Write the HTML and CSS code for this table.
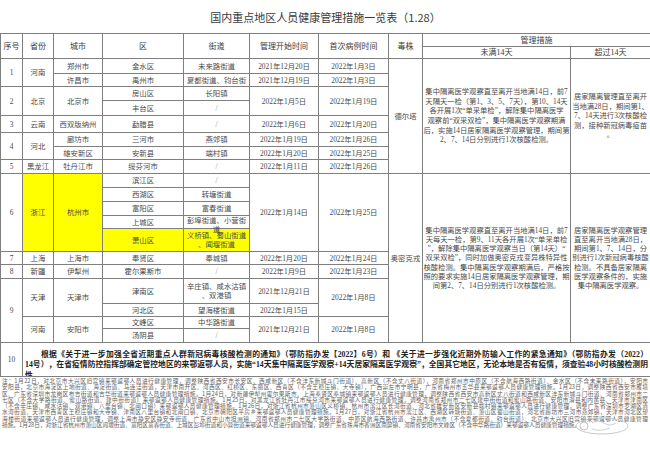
FILE: index.html
```
<!DOCTYPE html>
<html lang="zh-CN">
<head>
<meta charset="utf-8">
<link rel="stylesheet" href="styles.css">
</head>
<body>
<div class="page">
  <div class="title">国内重点地区人员健康管理措施一览表（1.28）</div>
  <table class="grid">
    <colgroup>
      <col class="c1"><col class="c2"><col class="c3"><col class="c4"><col class="c5">
      <col class="c6"><col class="c7"><col class="c8"><col class="c9"><col class="c10">
    </colgroup>
    <tr class="h13">
      <th rowspan="2">序号</th><th rowspan="2">省份</th><th rowspan="2">城市</th><th rowspan="2">区</th><th rowspan="2">街道</th>
      <th rowspan="2">管理开始时间</th><th rowspan="2">首次病例时间</th><th rowspan="2">毒株</th><th colspan="2">管理措施</th>
    </tr>
    <tr class="h12"><th>未满14天</th><th>超过14天</th></tr>

    <tr class="h15">
      <td rowspan="2">1</td><td rowspan="2">河南</td><td>郑州市</td><td>金水区</td><td>未来路街道</td>
      <td>2021年12月20日</td><td>2022年1月3日</td>
      <td rowspan="8">德尔塔</td>
      <td rowspan="8" class="policy">集中隔离医学观察直至离开当地满14日，前7<br>天隔天一检（第1、3、5、7天），第10、14天<br>各开展1次“单采单检”，解除集中隔离医学<br>观察前“双采双检”，集中隔离医学观察期满<br>后，实施14日居家隔离医学观察管理，期间第<br>2、7、14日分别进行1次核酸检测。</td>
      <td rowspan="8" class="policy wide">居家隔离管理直至离开<br>当地满28日，期间第1、<br>7、14天进行3次核酸检<br>测，接种新冠病毒疫苗<br>。</td>
    </tr>
    <tr class="h13"><td>许昌市</td><td>禹州市</td><td><div class="clip">夏都街道、钧台街道</div></td><td>2021年12月19日</td><td>2022年1月3日</td></tr>
    <tr class="h14">
      <td rowspan="2">2</td><td rowspan="2">北京</td><td rowspan="2">北京市</td><td>房山区</td><td>长阳镇</td>
      <td rowspan="2">2022年1月5日</td><td rowspan="2">2022年1月19日</td>
    </tr>
    <tr class="h15"><td>丰台区</td><td class="slash">/</td></tr>
    <tr class="h17"><td>3</td><td>云南</td><td>西双版纳州</td><td>勐腊县</td><td class="slash">/</td><td>2022年1月6日</td><td>2022年1月20日</td></tr>
    <tr class="h14">
      <td rowspan="2">4</td><td rowspan="2">河北</td><td>廊坊市</td><td>三河市</td><td>燕郊镇</td><td>2022年1月19日</td><td>2022年1月26日</td>
    </tr>
    <tr class="h13"><td>雄安新区</td><td>安新县</td><td>端村镇</td><td>2022年1月20日</td><td>2022年1月25日</td></tr>
    <tr class="h14"><td>5</td><td>黑龙江</td><td>牡丹江市</td><td>绥芬河市</td><td class="slash">/</td><td>2022年1月11日</td><td>2022年1月26日</td></tr>

    <tr class="h14">
      <td rowspan="5">6</td><td rowspan="5" class="hl">浙江</td><td rowspan="5" class="hl">杭州市</td><td>滨江区</td><td class="slash">/</td>
      <td rowspan="5">2022年1月14日</td><td rowspan="5">2022年1月25日</td>
      <td rowspan="11">奥密克戎</td>
      <td rowspan="11" class="policy tight">集中隔离医学观察直至离开当地满14日，前7<br>天每天一检，第9、11天各开展1次“单采单检<br>”，解除集中隔离医学观察当日（第14天）“<br>双采双检”，同时加做奥密克戎变异株特异性<br>核酸检测。集中隔离医学观察期满后，严格按<br>照的要求实施14日居家隔离医学观察管理，期<br>间第2、7、14日分别进行1次核酸检测。</td>
      <td rowspan="11" class="policy tight">居家隔离医学观察管理<br>直至离开当地满28日，<br>期间第1、7、14日，分<br>别进行1次新冠病毒核酸<br>检测。不具备居家隔离<br>医学观察条件的，实施<br>集中隔离医学观察。</td>
    </tr>
    <tr class="h14"><td>西湖区</td><td>转塘街道</td></tr>
    <tr class="h14"><td>富阳区</td><td>富春街道</td></tr>
    <tr class="h13"><td>上城区</td><td class="open"><div class="spill">彭埠街道、小营街道</div></td></tr>
    <tr class="h23"><td class="hl">萧山区</td><td class="hl two">义桥镇、蜀山街道<br>、闻堰街道</td></tr>
    <tr class="h13"><td>7</td><td>上海</td><td>上海市</td><td>奉贤区</td><td>奉城镇</td><td>2022年1月20日</td><td>2022年1月24日</td></tr>
    <tr class="h14"><td>8</td><td>新疆</td><td>伊犁州</td><td>霍尔果斯市</td><td class="slash">/</td><td>2022年1月9日</td><td>2022年1月23日</td></tr>
    <tr class="h25">
      <td rowspan="4">9</td><td rowspan="2">天津</td><td rowspan="2">天津市</td><td>津南区</td><td class="two">辛庄镇、咸水沽镇<br>、双港镇</td>
      <td>2021年12月21日</td><td rowspan="2">2022年1月8日</td>
    </tr>
    <tr class="h13"><td>河北区</td><td>望海楼街道</td><td>2022年1月15日</td></tr>
    <tr class="h12">
      <td rowspan="2">河南</td><td rowspan="2">安阳市</td><td>文峰区</td><td>中华路街道</td>
      <td rowspan="2">2021年12月21日</td><td rowspan="2">2022年1月8日</td>
    </tr>
    <tr class="h14"><td>汤阴县</td><td class="slash">/</td></tr>

    <tr class="h34">
      <td>10</td>
      <td colspan="9" class="basis-cell">
        <div class="basis">
          <p class="jl first">根据《关于进一步加强全省近期重点人群新冠病毒核酸检测的通知》（鄂防指办发【2022】6号）和 《关于进一步强化近期外防输入工作的紧急通知》（鄂防指办发（2022）</p>
          <p class="jl">14号），在省疫情防控指挥部确定管控地区的来鄂返鄂人员，实施“14天集中隔离医学观察+14天居家隔离医学观察”，全国其它地区，无论本地是否有疫情，须查验48小时核酸检测阴性</p>
          <p>证明，并到住地24小时内开展1次核酸检测，落实14天社区健康监测，每7天开展1次核酸检测。</p>
        </div>
      </td>
    </tr>
  </table>

  <div class="notes">
    <p class="jl">注：1月22日，对北京市大兴区旧宫镇来鄂返鄂人员进行健康管理，调整陕西省西安市长安区、西咸新区（不含沣东新城斗门街道）、高新区（不含丈八街道），河南省郑州市中原区（不含航海西路街道）、金水区（不含未来路街道），安阳市</p>
    <p class="jl">安阳县，北京市海淀区上地街道、海淀街道、马连洼街道，天津市南开区、河西区、红桥区、东丽区、西青区（不含王稳庄镇、大寺镇），广西崇左市宁明县，广东省梅州市五华县来鄂返鄂人员健康管理措施。1月23日，调整陕西省西安市雁塔</p>
    <p class="jl">区、广东省深圳市龙岗区布吉街道和吉华街道来鄂返鄂人员健康管理措施。1月24日，对新疆伊犁州霍尔果斯市、上海奉贤区奉城镇来鄂返鄂人员进行健康管理，调整陕西省西安市高新区丈八街道和西咸新区沣东新城斗门街道、河南省郑州市二</p>
    <p class="jl">七区（不含大学路街道、蜜山路街道、建中街街道）来鄂返鄂人员健康管理措施。1月25日，对黑龙江省牡丹江市绥芬河市来鄂返鄂人员进行健康管理，调整河南省郑州市二七区建中街街道和蜜山路街道、安阳市滑县和内黄县、天津市津南区</p>
    <p class="jl">（不含辛庄镇、咸水沽镇、双港镇、八里台镇、北闸口镇）来鄂返鄂人员健康管理措施。1月26日，对浙江省杭州市萧山区义桥镇、杭州市滨江区长河街道、河北省雄安新区安新县端村镇来鄂返鄂人员进行健康管理，调整广东省深圳市罗湖区清</p>
    <p class="jl">水河街道、天津市西青区王稳庄镇和大寺镇、津南区八里台镇和北闸口镇、北京市朝阳区平房乡来鄂返鄂人员健康管理措施。1月27日，对浙江省杭州市滨江区、西湖区转塘街道、萧山区蜀山街道，河北省廊坊市三河市燕郊镇，天津市河北区望</p>
    <p class="jl">海楼街道来鄂返鄂人员进行健康管理，调整上海市静安区静安寺街道、广东省中山市坦洲镇、河南省郑州市二七区大学路街道、中原区航海西路街道、许昌市禹州市（不含夏都街道、钧台街道）、北京市大兴区旧宫镇来鄂返鄂人员健康管理</p>
    <p>措施。1月28日，对浙江省杭州市萧山区闻堰街道、富阳区富春街道、上城区彭埠街道和小营街道来鄂返鄂人员进行健康管理，调整广东省珠海市香洲区南屏镇、河南省安阳市文峰区（不含中华路街道）来鄂返鄂人员健康管理措施。</p>
    <svg class="stamp" width="64" height="22" viewBox="0 0 64 22">
      <ellipse cx="30" cy="11" rx="26" ry="8" fill="none" stroke="#c8c8c8" stroke-width="1"/>
      <circle cx="12" cy="11" r="4" fill="none" stroke="#c4c4c4" stroke-width="1"/>
      <path d="M20 8 q6 -4 12 0 t12 0" fill="none" stroke="#d0d0d0" stroke-width="1"/>
      <path d="M20 14 q8 3 18 -1" fill="none" stroke="#d0d0d0" stroke-width="1"/>
    </svg>
  </div>
</div>
</body>
</html>
```

FILE: styles.css
```
* { box-sizing: border-box; }
html, body { margin: 0; padding: 0; background: #fff; }
body {
  width: 650px;
  height: 454px;
  overflow: hidden;
  font-family: "Liberation Serif", "Noto Sans CJK SC", serif;
  color: #4a4a4a;
}
.page { width: 650px; }
.title {
  height: 33px;
  display: flex;
  align-items: center;
  justify-content: center;
  font-family: "Noto Sans CJK SC", sans-serif;
  font-size: 11px;
  color: #3a3a3a;
  padding-top: 1px;
  padding-left: 1px;
}
.grid {
  width: 650px;
  border-collapse: collapse;
  table-layout: fixed;
  font-size: 7.4px;
}
.c1 { width: 22px; } .c2 { width: 31px; } .c3 { width: 49px; } .c4 { width: 81px; } .c5 { width: 66px; }
.c6 { width: 69px; } .c7 { width: 70px; } .c8 { width: 34px; } .c9 { width: 148px; } .c10 { width: 80px; }
.grid th, .grid td {
  border: 1px solid #7f7f7f;
  padding: 0;
  text-align: center;
  vertical-align: middle;
  line-height: 9px;
  overflow: hidden;
  white-space: nowrap;
}
.grid th { font-weight: normal; font-size: 8px; color: #3c3c3c; }
.h12 { height: 12px; } .h13 { height: 13px; } .h14 { height: 14px; } .h15 { height: 15px; }
.h17 { height: 17px; } .h23 { height: 23px; } .h25 { height: 25px; } .h34 { height: 34px; }
.hl { background: #ffff00; }
.slash { color: #8a8a8a; }
.clip { height: 9px; overflow: hidden; white-space: normal; }
.grid td.open { overflow: visible; }
.spill { height: 12px; white-space: normal; line-height: 8.5px; padding-top: 1px; overflow: visible; }
.grid td.two { line-height: 9.5px; }
.policy { font-size: 7.3px; }
.grid td.policy { line-height: 9.6px; }
.grid td.tight { line-height: 9.2px; }
.grid td.basis-cell { vertical-align: top; }
.basis {
  height: 33px;
  overflow: hidden;
  white-space: normal;
  font-weight: bold;
  font-size: 7.8px;
  line-height: 10.3px;
  color: #222;
  padding: 7px 2px 0 2px;
}
.basis p { margin: 0; text-align: left; }
.basis p.first { text-indent: 16px; }
.jl { text-align: justify; text-align-last: justify; }
.basis p.jl { text-align: justify; text-align-last: justify; }
.notes {
  position: relative;
  padding: 1px 2px 0 2px;
  font-family: "Noto Sans CJK SC", sans-serif;
  font-size: 5.7px;
  line-height: 6.25px;
  color: #5e5e5e;
}
.notes p { margin: 0; white-space: normal; }
.stamp { position: absolute; right: 14px; top: 38px; }
```
